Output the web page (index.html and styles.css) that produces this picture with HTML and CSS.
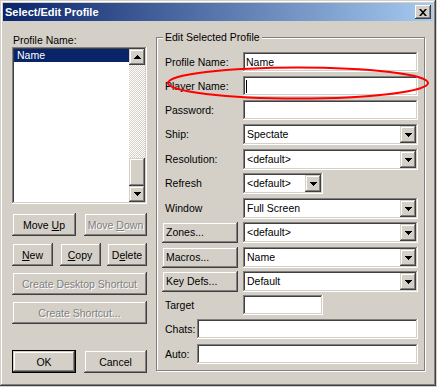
FILE: index.html
```html
<!DOCTYPE html>
<html>
<head>
<meta charset="utf-8">
<title>Select/Edit Profile</title>
<link rel="stylesheet" href="styles.css">
</head>
<body>
<div class="window">
  <div class="titlebar">
    <span class="title">Select/Edit Profile</span>
    <div class="close">
      <svg width="8" height="7" viewBox="0 0 8 7"><path d="M0 0H2L4 2.2 6 0H8L5 3.5 8 7H6L4 4.8 2 7H0L3 3.5Z" fill="#000"/></svg>
    </div>
  </div>
  <div class="client">
    <div class="left">
      <div class="cap">Profile Name:</div>
      <div class="listbox">
        <div class="items"><div class="item sel">Name</div></div>
        <div class="vscroll">
          <div class="sbtn"><svg width="7" height="4" viewBox="0 0 7 4"><path d="M0 4H7V3H6V2H5V1H4V0H3V1H2V2H1V3H0Z" fill="#000"/></svg></div>
          <div class="track"></div>
          <div class="thumb"></div>
          <div class="sbtn"><svg width="7" height="4" viewBox="0 0 7 4"><path d="M0 0H7V1H6V2H5V3H4V4H3V3H2V2H1V1H0Z" fill="#000"/></svg></div>
        </div>
      </div>
      <div class="brow first">
        <div class="btn w64"><span>Move <u>U</u>p</span></div>
        <div class="btn w63 dis"><span>Move <u>D</u>own</span></div>
      </div>
      <div class="brow second">
        <div class="btn w41"><span><u>N</u>ew</span></div>
        <div class="btn w41"><span><u>C</u>opy</span></div>
        <div class="btn w40"><span>D<u>e</u>lete</span></div>
      </div>
      <div class="btn full dis gap6"><span>Create Desktop Shortcut</span></div>
      <div class="btn full dis gap6"><span>Create Shortcut...</span></div>
      <div class="brow last">
        <div class="btn w64 def"><span>OK</span></div>
        <div class="btn w63"><span>Cancel</span></div>
      </div>
    </div>
    <div class="group">
      <div class="legend">Edit Selected Profile</div>
      <div class="rows">
        <div class="row"><div class="lab">Profile Name:</div><div class="edit">Name</div></div>
        <div class="row"><div class="lab">Player Name:</div><div class="edit"><span class="caret"></span></div></div>
        <div class="row"><div class="lab">Password:</div><div class="edit"></div></div>
        <div class="row h25"><div class="lab c">Ship:</div><div class="combo"><span class="val">Spectate</span><span class="drop"><svg width="7" height="4" viewBox="0 0 7 4"><path d="M0 0H7V1H6V2H5V3H4V4H3V3H2V2H1V1H0Z" fill="#000"/></svg></span></div></div>
        <div class="row"><div class="lab c">Resolution:</div><div class="combo"><span class="val">&lt;default&gt;</span><span class="drop"><svg width="7" height="4" viewBox="0 0 7 4"><path d="M0 0H7V1H6V2H5V3H4V4H3V3H2V2H1V1H0Z" fill="#000"/></svg></span></div></div>
        <div class="row h25"><div class="lab c">Refresh</div><div class="combo short"><span class="val">&lt;default&gt;</span><span class="drop"><svg width="7" height="4" viewBox="0 0 7 4"><path d="M0 0H7V1H6V2H5V3H4V4H3V3H2V2H1V1H0Z" fill="#000"/></svg></span></div></div>
        <div class="row"><div class="lab c">Window</div><div class="combo"><span class="val">Full Screen</span><span class="drop"><svg width="7" height="4" viewBox="0 0 7 4"><path d="M0 0H7V1H6V2H5V3H4V4H3V3H2V2H1V1H0Z" fill="#000"/></svg></span></div></div>
        <div class="row h25"><div class="labbtn">Zones...</div><div class="combo"><span class="val">&lt;default&gt;</span><span class="drop"><svg width="7" height="4" viewBox="0 0 7 4"><path d="M0 0H7V1H6V2H5V3H4V4H3V3H2V2H1V1H0Z" fill="#000"/></svg></span></div></div>
        <div class="row"><div class="labbtn">Macros...</div><div class="combo"><span class="val">Name</span><span class="drop"><svg width="7" height="4" viewBox="0 0 7 4"><path d="M0 0H7V1H6V2H5V3H4V4H3V3H2V2H1V1H0Z" fill="#000"/></svg></span></div></div>
        <div class="row"><div class="labbtn">Key Defs...</div><div class="combo"><span class="val">Default</span><span class="drop"><svg width="7" height="4" viewBox="0 0 7 4"><path d="M0 0H7V1H6V2H5V3H4V4H3V3H2V2H1V1H0Z" fill="#000"/></svg></span></div></div>
        <div class="row"><div class="lab">Target</div><div class="edit short"></div></div>
        <div class="row h25"><div class="lab narrow">Chats:</div><div class="edit long"></div></div>
        <div class="row end"><div class="lab narrow">Auto:</div><div class="edit long"></div></div>
      </div>
    </div>
  </div>
  <svg class="mark" width="264" height="36" viewBox="0 0 264 36"><ellipse cx="132" cy="18" rx="130" ry="15.5" fill="none" stroke="#ff0000" stroke-width="2"/></svg>
</div>
</body>
</html>
```

FILE: styles.css
```css
* { box-sizing: border-box; }
html, body { margin: 0; padding: 0; }
body {
  width: 437px;
  height: 387px;
  overflow: hidden;
  background: #d4d0c8;
  font-family: "Liberation Sans", Arial, sans-serif;
  font-size: 10.5px;
  color: #000;
}
.window {
  position: relative;
  width: 436px;
  height: 386px;
  padding: 3px;
  background: #d4d0c8;
  box-shadow: inset -1px -1px #404040, inset 1px 1px #d4d0c8, inset -2px -2px #808080, inset 2px 2px #fff;
}
.titlebar {
  height: 18px;
  display: flex;
  align-items: center;
  justify-content: space-between;
  padding: 0 2px;
  background: linear-gradient(90deg, #0a246a, #a6caf0);
}
.title {
  color: #fff;
  font-weight: bold;
  font-size: 11px;
  line-height: 13px;
}
.close {
  width: 16px;
  height: 14px;
  display: flex;
  align-items: center;
  justify-content: center;
  background: #d4d0c8;
  box-shadow: inset -1px -1px #404040, inset 1px 1px #fff, inset -2px -2px #808080, inset 2px 2px #d4d0c8;
}
.close svg { display: block; margin-left: -1px; }

.client {
  display: flex;
  align-items: flex-start;
  padding: 13px 8px 0 9px;
}
.left {
  width: 135px;
  display: flex;
  flex-direction: column;
}
.cap {
  height: 13px;
  line-height: 13px;
  padding-left: 1px;
}
.listbox {
  height: 157px;
  display: flex;
  padding: 2px;
  background: #fff;
  box-shadow: inset -1px -1px #fff, inset 1px 1px #808080, inset -2px -2px #d4d0c8, inset 2px 2px #404040;
}
.items { flex: 1; }
.item {
  height: 13px;
  line-height: 13px;
  padding-left: 3px;
}
.item.sel { background: #0a246a; color: #fff; }
.vscroll {
  width: 16px;
  display: flex;
  flex-direction: column;
}
.sbtn, .thumb, .drop, .btn, .labbtn {
  background: #d4d0c8;
  box-shadow: inset -1px -1px #404040, inset 1px 1px #d4d0c8, inset -2px -2px #808080, inset 2px 2px #fff;
}
.sbtn {
  height: 16px;
  display: flex;
  align-items: center;
  justify-content: center;
}
.sbtn svg, .drop svg { display: block; }
.track {
  flex: 1;
  background: repeating-conic-gradient(#d4d0c8 0 25%, #fff 0 50%) 0 0 / 2px 2px;
}
.thumb { height: 28px; }

.btn {
  height: 23px;
  display: flex;
  align-items: center;
  justify-content: center;
  white-space: nowrap;
}
.btn u { text-decoration: underline; text-underline-offset: 1px; }
.btn.dis { color: #808080; text-shadow: 1px 1px 0 #fff; }
.btn.def {
  border: 1px solid #000;
}
.brow { display: flex; justify-content: space-between; }
.brow.first { margin-top: 9px; }
.brow.second { margin-top: 7px; }
.brow.last { margin-top: 26px; }
.gap6 { margin-top: 6px; }
.w64 { width: 64px; }
.w63 { width: 63px; }
.w41 { width: 41px; }
.w40 { width: 40px; }
.full { width: 135px; }

.group {
  margin: 3px 0 0 9px;
  width: 269px;
  height: 334px;
  border: 1px solid #808080;
  box-shadow: inset 1px 1px #fff, 1px 1px #fff;
  padding: 0 6px 0 5px;
}
.legend {
  width: max-content;
  margin: -7px 0 0 1px;
  padding: 0 2px;
  line-height: 13px;
  background: #d4d0c8;
}
.rows { margin-top: 8px; }
.row {
  display: flex;
  align-items: flex-start;
  height: 24px;
}
.row.h25 { height: 25px; }
.row.end { height: 20px; }
.lab {
  width: 81px;
  padding-left: 3px;
  line-height: 20px;
  white-space: nowrap;
}
.lab.c { line-height: 21px; }
.lab.narrow { width: 35px; }
.labbtn {
  width: 76px;
  height: 21px;
  margin-right: 5px;
  padding-left: 4px;
  line-height: 21px;
}
.edit, .combo {
  width: 175px;
  background: #fff;
  box-shadow: inset -1px -1px #fff, inset 1px 1px #808080, inset -2px -2px #d4d0c8, inset 2px 2px #404040;
}
.edit {
  height: 20px;
  padding: 0 3px;
  line-height: 20px;
  display: flex;
  align-items: center;
}
.edit.short { width: 80px; }
.edit.long { width: 221px; }
.caret {
  width: 1px;
  height: 13px;
  background: #000;
}
.combo {
  height: 21px;
  display: flex;
  padding: 2px;
}
.combo.short { width: 80px; }
.combo .val {
  flex: 1;
  line-height: 17px;
  padding-left: 2px;
  white-space: nowrap;
  overflow: hidden;
}
.drop {
  width: 16px;
  height: 17px;
  display: flex;
  align-items: center;
  justify-content: center;
}
.mark {
  position: absolute;
  left: 166px;
  top: 65px;
}
```
